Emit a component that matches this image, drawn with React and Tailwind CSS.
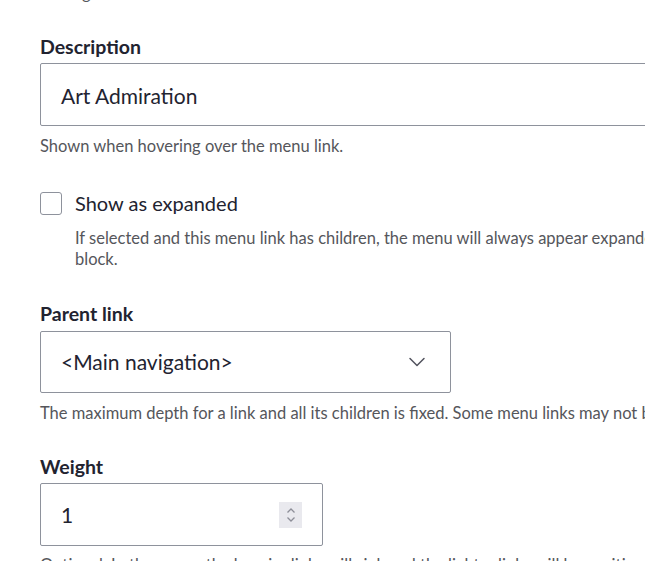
import { ChevronDown } from 'lucide-react';

const font = { fontFamily: 'Lato, "Noto Sans", sans-serif' };

function Label({ children }) {
  return <div className="text-[19.5px] leading-[22px] font-bold text-[#222330]">{children}</div>;
}

function Help({ children, className = '' }) {
  return (
    <div className={'text-[16.5px] leading-[21px] text-[#55565b] whitespace-nowrap ' + className}>{children}</div>
  );
}

export default function App() {
  return (
    <div className="w-[645px] h-[561px] overflow-hidden bg-white" style={font}>
      <div className="pl-[40px] w-[900px]">
        <Help className="-mt-[17px]">Settings used for this menu link.</Help>

        {/* Description */}
        <div className="mt-[32px]">
          <Label>Description</Label>
          <div className="mt-[5px] w-[700px] h-[63px] border border-[#8e929c] rounded-[2px] flex items-center px-[20px] pt-[2px] text-[21px] text-[#222330]">
            Art Admiration
          </div>
          <Help className="mt-[10px]">Shown when hovering over the menu link.</Help>
        </div>

        {/* Show as expanded */}
        <div className="mt-[33px]">
          <div className="flex items-center gap-[13px]">
            <div className="w-[22px] h-[23px] border border-[#8e929c] rounded-[3px] bg-white" />
            <div className="text-[20px] leading-[26px] text-[#222330]">Show as expanded</div>
          </div>
          <Help className="ml-[35px] mt-[12px]">
            If selected and this menu link has children, the menu will always appear expanded. This option may be overridden for the entire menu tree when placing a menu
            <br />
            block.
          </Help>
        </div>

        {/* Parent link */}
        <div className="mt-[33px]">
          <Label>Parent link</Label>
          <div className="mt-[6px] w-[411px] h-[62px] border border-[#8e929c] rounded-[2px] flex items-center justify-between pl-[20px] pr-[19px] text-[21px] text-[#222330]">
            <span>&lt;Main navigation&gt;</span>
            <ChevronDown className="w-[28px] h-[28px] text-[#545560]" strokeWidth={1.3} />
          </div>
          <Help className="mt-[10px]">
            The maximum depth for a link and all its children is fixed. Some menu links may not be available as parents if selecting them would exceed this limit.
          </Help>
        </div>

        {/* Weight */}
        <div className="mt-[32px]">
          <Label>Weight</Label>
          <div className="mt-[5px] w-[283px] h-[63px] border border-[#8e929c] rounded-[2px] flex items-center justify-between pl-[20px] pr-[20px] text-[21px] text-[#222330]">
            <span>1</span>
            <div className="w-[23px] h-[26px] bg-[#e9e9ee] flex flex-col items-center justify-center">
              <svg width="10" height="18" viewBox="0 0 10 18" fill="none" stroke="#8d8e98" strokeWidth="1.3">
                <path d="M1.5 6.5 L5 3 L8.5 6.5" />
                <path d="M1.5 11.5 L5 15 L8.5 11.5" />
              </svg>
            </div>
          </div>
          <Help className="mt-[9px]">
            Optional. In the menu, the heavier links will sink and the lighter links will be positioned nearer the top.
          </Help>
        </div>
      </div>
    </div>
  );
}
